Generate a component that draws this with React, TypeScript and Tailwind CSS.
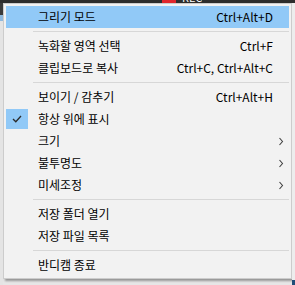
import React from "react";

type Item =
  | { kind: "sep" }
  | { kind: "item"; label: string; shortcut?: string; sub?: boolean; checked?: boolean; active?: boolean };

const items: Item[] = [
  { kind: "item", label: "그리기 모드", shortcut: "Ctrl+Alt+D", active: true },
  { kind: "sep" },
  { kind: "item", label: "녹화할 영역 선택", shortcut: "Ctrl+F" },
  { kind: "item", label: "클립보드로 복사", shortcut: "Ctrl+C, Ctrl+Alt+C" },
  { kind: "sep" },
  { kind: "item", label: "보이기 / 감추기", shortcut: "Ctrl+Alt+H" },
  { kind: "item", label: "항상 위에 표시", checked: true },
  { kind: "item", label: "크기", sub: true },
  { kind: "item", label: "불투명도", sub: true },
  { kind: "item", label: "미세조정", sub: true },
  { kind: "sep" },
  { kind: "item", label: "저장 폴더 열기" },
  { kind: "item", label: "저장 파일 목록" },
  { kind: "sep" },
  { kind: "item", label: "반디캠 종료" },
];

function Chevron() {
  return (
    <svg width="6" height="9" viewBox="0 0 6 9" fill="none">
      <path d="M1.5 1 L4.5 4.5 L1.5 8" stroke="#404040" strokeWidth="1.1" />
    </svg>
  );
}

function Check() {
  return (
    <svg width="12" height="10" viewBox="0 0 12 10" fill="none">
      <path d="M2 5 L4.8 7.8 L10 2" stroke="#2a2a2a" strokeWidth="1.3" />
    </svg>
  );
}

export default function App() {
  return (
    <div
      className="w-[295px] h-[285px] overflow-hidden bg-[#e6e6e6] flex flex-col"
      style={{ fontFamily: '"Noto Sans CJK KR", "Noto Sans", sans-serif' }}
    >
      <div className="h-[3px] shrink-0 bg-[#2d2d2d] flex items-end overflow-hidden">
        <div className="ml-[162px] w-[14px] h-[3px] bg-[#e0262b]" />
        <div className="ml-[6px] text-[11px] leading-none text-white h-[3px] overflow-hidden flex items-end">
          <span className="-mb-[0px]">REC</span>
        </div>
      </div>
      <div className="flex flex-1">
        <div className="w-[3px] shrink-0 flex flex-col">
          <div className="h-[12px] bg-[#3a3a3a]" />
          <div className="h-[6px] bg-[#8fb8dc]" />
          <div className="flex-1 bg-[#e4e4e4]" />
        </div>
        <div className="flex flex-col">
          <div className="w-[289px] bg-[#f2f2f2] border border-[#cccccc] px-[2px] pt-[2px] pb-[2px] shadow-[2px_2px_2px_rgba(0,0,0,0.35)] text-[12px] text-black">
            {items.map((it, i) =>
              it.kind === "sep" ? (
                <div key={i} className="h-[7px] flex items-center">
                  <div className="ml-[27px] w-full h-px bg-[#d7d7d7]" />
                </div>
              ) : (
                <div
                  key={i}
                  className={`h-[22px] flex items-center ${it.active ? "bg-[#91c9f7]" : ""}`}
                >
                  <div className="w-[32px] h-[22px] shrink-0 flex items-center">
                    {it.checked ? (
                      <div className="w-[22px] h-[20px] bg-[#91c9f7] flex items-center justify-center">
                        <Check />
                      </div>
                    ) : null}
                  </div>
                  <div className="flex-1 leading-none whitespace-nowrap">{it.label}</div>
                  <div className="leading-none whitespace-nowrap">{it.shortcut ?? ""}</div>
                  <div className="w-[16px] shrink-0 flex items-center justify-center">
                    {it.sub ? <Chevron /> : null}
                  </div>
                </div>
              )
            )}
          </div>
        </div>
        <div className="flex-1 flex flex-col">
          <div className="flex-1 bg-[#ededed]" />
          <div className="h-[5px] bg-[#1f4e79]" />
        </div>
      </div>
    </div>
  );
}
